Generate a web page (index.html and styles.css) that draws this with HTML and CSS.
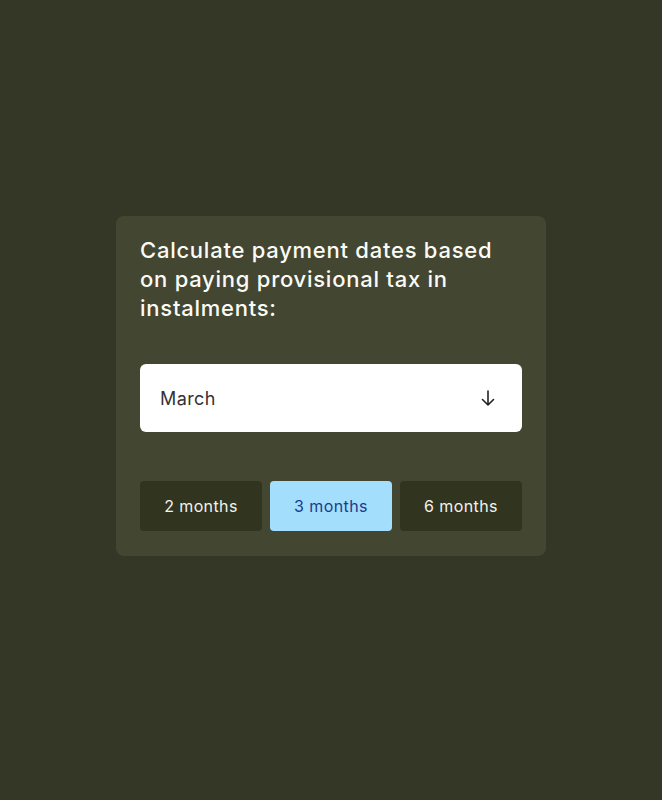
FILE: index.html
```html
<!DOCTYPE html>
<html lang="en">
<head>
<meta charset="utf-8">
<link rel="stylesheet" href="styles.css">
</head>
<body>
<main class="page">
  <section class="card">
    <h1 class="title">Calculate payment dates based on paying provisional tax in instalments:</h1>
    <div class="select">
      <span class="select-value">March</span>
      <svg class="select-icon" width="20" height="20" viewBox="0 0 20 20" fill="none" stroke="#222" stroke-width="1.6" stroke-linecap="round" stroke-linejoin="round"><path d="M10 3v14M4.5 11.5 10 17l5.5-5.5"/></svg>
    </div>
    <div class="options">
      <button class="opt">2 months</button>
      <button class="opt opt-active">3 months</button>
      <button class="opt">6 months</button>
    </div>
  </section>
</main>
</body>
</html>
```
FILE: styles.css
```css
html, body {
  margin: 0;
  padding: 0;
}
body {
  background: #343726;
  font-family: Inter, "Noto Sans", "Liberation Sans", sans-serif;
  width: 662px;
  height: 800px;
}
.page {
  display: flex;
  justify-content: center;
  padding-top: 216px;
}
.card {
  width: 430px;
  box-sizing: border-box;
  background: #434631;
  border-radius: 8px;
  padding: 20px 24px 25px;
}
.title {
  margin: 0;
  max-width: 370px;
  color: #fbfbf6;
  font-size: 22px;
  line-height: 29px;
  font-weight: 500;
  letter-spacing: 0.75px;
}
.select {
  margin-top: 41px;
  height: 68px;
  background: #ffffff;
  border-radius: 6px;
  display: flex;
  align-items: center;
  justify-content: space-between;
  padding: 0 24px 0 20px;
}
.select-value {
  font-size: 18px;
  color: #333;
  letter-spacing: 0.4px;
}
.select-icon {
  display: block;
}
.options {
  margin-top: 49px;
  display: grid;
  grid-template-columns: repeat(3, 1fr);
  gap: 8px;
}
.opt {
  height: 50px;
  border: 0;
  border-radius: 4px;
  background: #31341f;
  color: #f3f3ee;
  font-family: inherit;
  font-size: 16px;
  letter-spacing: 0.4px;
  padding: 0;
}
.opt-active {
  background: #a3defc;
  color: #1c3a8c;
}
```
